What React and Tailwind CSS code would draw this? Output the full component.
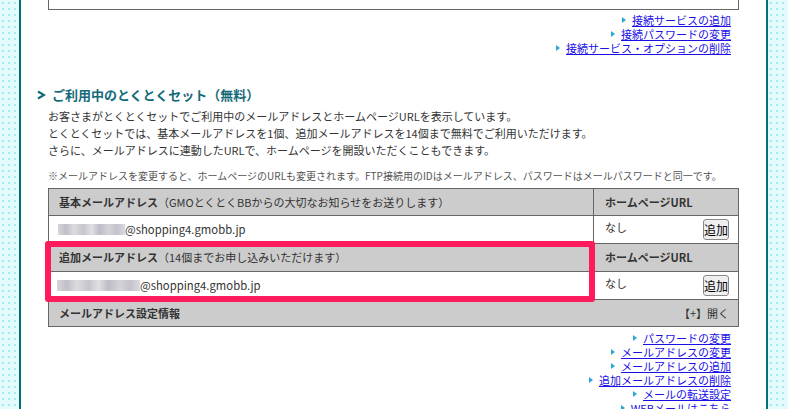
import React from "react";

const Bullet = () => (
  <span className="mr-[6px] inline-block h-0 w-0 border-y-[3px] border-l-[4px] border-y-transparent border-l-[#2ba8d4]" />
);

const NavLink = ({ children }) => (
  <div className="flex h-[14px] items-center justify-end">
    <Bullet />
    <a href="#" className="text-[#1a10e6] underline underline-offset-[1px]">
      {children}
    </a>
  </div>
);

const Blur = ({ className }) => (
  <span
    className={
      "inline-block h-[11px] align-[-1px] blur-[0.7px] bg-[linear-gradient(90deg,#d6d6da_0%,#c2bec9_12%,#dcdcdf_24%,#c6c5cd_38%,#e0e0e2_50%,#bfbcc8_62%,#d4d4d8_76%,#c4c2cc_88%,#dadadf_100%)] " +
      className
    }
  />
);

const AddButton = () => (
  <button className="flex h-[21px] w-[26px] items-center justify-center rounded-[3px] border border-[#8a8a8a] bg-[#efefef] text-[12px] leading-none text-black">
    追加
  </button>
);

export default function App() {
  return (
    <div
      className="flex h-[409px] w-[788px] overflow-hidden bg-[#e4fbfd] bg-[radial-gradient(circle,#a3ebf4_1.1px,transparent_1.4px)] bg-[length:6px_6px] pl-[19px] pr-[20px] text-[11px] text-[#333]"
      style={{ fontFamily: '"Noto Sans CJK JP", "Noto Sans", sans-serif' }}
    >
      <div className="h-full flex-1 border-x-2 border-[#00707f] bg-white px-[27px]">
        {/* top box (cut) */}
        <div className="mt-[-21px] h-[31px] border border-[#666] pl-[9px] pt-[6px] text-[12px] leading-[16px]">
          なし
        </div>

        <div className="mt-[3px] pr-[8px] leading-[14px]">
          <NavLink>接続サービスの追加</NavLink>
          <NavLink>接続パスワードの変更</NavLink>
          <NavLink>接続サービス・オプションの削除</NavLink>
        </div>

        <div className="-ml-[11px] mt-[31px] flex h-[18px] items-center text-[13px] font-bold text-[#136b79]">
          <svg width="9" height="10" viewBox="0 0 9 10" className="mr-[6px]">
            <polyline
              points="1,1.5 7,5 1,8.5"
              fill="none"
              stroke="#136b79"
              strokeWidth="2.2"
            />
          </svg>
          <span>ご利用中のとくとくセット（無料）</span>
        </div>

        <div className="mt-[4px] leading-[17px]">
          <p>お客さまがとくとくセットでご利用中のメールアドレスとホームページURLを表示しています。</p>
          <p>とくとくセットでは、基本メールアドレスを1個、追加メールアドレスを14個まで無料でご利用いただけます。</p>
          <p>さらに、メールアドレスに連動したURLで、ホームページを開設いただくこともできます。</p>
        </div>

        <p className="mt-[10px] text-[10px] leading-[14px] text-[#555]">
          ※メールアドレスを変更すると、ホームページのURLも変更されます。FTP接続用のIDはメールアドレス、パスワードはメールパスワードと同一です。
        </p>

        <div className="relative mt-[5px] border border-[#666]">
          {/* header 1 */}
          <div className="grid h-[27px] grid-cols-[545px_1fr] border-b border-[#666] bg-[#cccccc]">
            <div className="flex items-center border-r border-[#666] pl-[10px]">
              <span className="font-bold">基本メールアドレス</span>
              <span>（GMOとくとくBBからの大切なお知らせをお送りします）</span>
            </div>
            <div className="flex items-center pl-[11px] font-bold">ホームページURL</div>
          </div>
          {/* row 2 */}
          <div className="grid h-[28px] grid-cols-[545px_1fr] border-b border-[#666] bg-white">
            <div className="flex items-center border-r border-[#666] pl-[9px] text-[11.3px]">
              <Blur className="w-[67px]" />
              <span>@shopping4.gmobb.jp</span>
            </div>
            <div className="flex items-start justify-between pl-[11px] pr-[9px] pt-[3px]">
              <span className="leading-[16px]">なし</span>
              <AddButton />
            </div>
          </div>
          {/* header 3 */}
          <div className="grid h-[28px] grid-cols-[545px_1fr] border-b border-[#666] bg-[#cccccc]">
            <div className="flex items-center border-r border-[#666] pl-[10px]">
              <span className="font-bold">追加メールアドレス</span>
              <span>（14個までお申し込みいただけます）</span>
            </div>
            <div className="flex items-center pl-[11px] font-bold">ホームページURL</div>
          </div>
          {/* row 4 */}
          <div className="grid h-[28px] grid-cols-[545px_1fr] border-b border-[#666] bg-white">
            <div className="flex items-center border-r border-[#666] pl-[8px] text-[11.3px]">
              <Blur className="w-[83px]" />
              <span>@shopping4.gmobb.jp</span>
            </div>
            <div className="flex items-start justify-between pl-[11px] pr-[9px] pt-[3px]">
              <span className="leading-[16px]">なし</span>
              <AddButton />
            </div>
          </div>
          {/* footer */}
          <div className="flex h-[26px] items-center justify-between bg-[#cccccc] pl-[10px] pr-[9px]">
            <span className="font-bold">メールアドレス設定情報</span>
            <span>【+】開く</span>
          </div>

          <div className="pointer-events-none absolute left-[-4px] top-[52px] h-[61px] w-[550px] rounded-[3px] border-[6px] border-[#fe1a5b]" />
        </div>

        <div className="mt-[4px] pr-[8px] leading-[14px]">
          <NavLink>パスワードの変更</NavLink>
          <NavLink>メールアドレスの変更</NavLink>
          <NavLink>メールアドレスの追加</NavLink>
          <NavLink>追加メールアドレスの削除</NavLink>
          <NavLink>メールの転送設定</NavLink>
          <NavLink>WEBメールはこちら</NavLink>
        </div>
      </div>
    </div>
  );
}
